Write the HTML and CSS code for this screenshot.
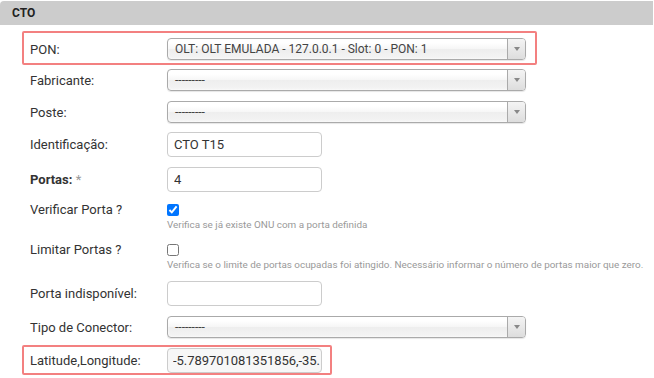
FILE: index.html
```html
<!DOCTYPE html>
<html lang="pt-BR">
<head>
    <meta charset="UTF-8">
    <title>CTO</title>
    <link rel="stylesheet" href="styles.css">
</head>
<body>

<div class="panel-heading">CTO</div>

<form class="cto-form">

    <!-- PON -->
    <div class="form-row highlight wide pon-row">
        <label class="form-label">PON:</label>
        <div class="chosen">
            <span class="chosen-text">OLT: OLT EMULADA - 127.0.0.1 - Slot: 0 - PON: 1</span>
            <span class="chosen-arrow"><b></b></span>
        </div>
    </div>

    <div class="form-row wide fab-row">
        <label class="form-label">Fabricante:</label>
        <div class="chosen">
            <span class="chosen-text">---------</span>
            <span class="chosen-arrow"><b></b></span>
        </div>
    </div>

    <div class="form-row wide gap6">
        <label class="form-label">Poste:</label>
        <div class="chosen">
            <span class="chosen-text">---------</span>
            <span class="chosen-arrow"><b></b></span>
        </div>
    </div>

    <div class="form-row gap5">
        <label class="form-label">Identificação:</label>
        <input class="form-input" type="text" value="CTO T15">
    </div>

    <div class="form-row gap6">
        <label class="form-label"><strong>Portas:</strong> <span class="req">*</span></label>
        <input class="form-input" type="text" value="4">
    </div>

    <!-- checkboxes -->
    <div class="form-row check-row gap6">
        <label class="form-label">Verificar Porta ?</label>
        <div class="check-col">
            <input type="checkbox" checked>
            <span class="help">Verifica se já existe ONU com a porta definida</span>
        </div>
    </div>

    <div class="form-row check-row gap6">
        <label class="form-label">Limitar Portas ?</label>
        <div class="check-col">
            <input type="checkbox">
            <span class="help">Verifica se o limite de portas ocupadas foi atingido. Necessário informar o número de portas maior que zero.</span>
        </div>
    </div>

    <div class="form-row gap5">
        <label class="form-label">Porta indisponível:</label>
        <input class="form-input" type="text" value="">
    </div>

    <div class="form-row wide gap6">
        <label class="form-label">Tipo de Conector:</label>
        <div class="chosen">
            <span class="chosen-text">---------</span>
            <span class="chosen-arrow"><b></b></span>
        </div>
    </div>

    <div class="form-row highlight latlng-row">
        <label class="form-label">Latitude,Longitude:</label>
        <input class="form-input readonly" type="text" value="-5.789701081351856,-35." readonly>
    </div>

</form>

</body>
</html>
```

FILE: styles.css
```css
body {
    margin: 0;
    padding-top: 1px;
    font-family: Roboto, "Liberation Sans", Arial, sans-serif;
    font-size: 13px;
    color: #333;
    background: #fff;
}

.panel-heading {
    width: 641px;
    height: 24px;
    line-height: 25px;
    padding-left: 12px;
    background-color: #cccccc;
    border-radius: 4px 0 0 0;
    font-size: 12px;
    font-weight: bold;
    color: #222;
}

.cto-form {
    padding-left: 22px;
}

/* each row: label column + control column */
.form-row {
    display: flex;
    align-items: center;
    width: 310px;
    box-sizing: border-box;
    border: 2px solid transparent;
    padding: 0 6px;
}

.form-row.wide {
    width: 515px;
}

.form-row.highlight {
    border-color: #f38080;
    border-radius: 2px;
}

.pon-row {
    margin-top: 6px;
    padding-top: 5px;
    padding-bottom: 3px;
}

.fab-row { margin-top: 2px; }
.gap5 { margin-top: 5px; }
.gap6 { margin-top: 6px; }

.latlng-row {
    margin-top: 5px;
    padding-top: 1px;
    padding-bottom: 0;
}

.form-label {
    width: 137px;
    flex-shrink: 0;
}

.form-label strong {
    color: #333;
}

.req {
    color: #999;
}

/* chosen style select */
.chosen {
    display: flex;
    width: 359px;
    height: 22px;
    box-sizing: border-box;
    border: 1px solid #aaa;
    border-radius: 4px;
    background: linear-gradient(#fff 20%, #f6f6f6 50%, #eee 52%, #f4f4f4 100%);
    box-shadow: 0 0 3px #fff inset, 0 1px 1px rgba(0,0,0,.1);
    overflow: hidden;
}

.chosen-text {
    flex: 1;
    padding-left: 7px;
    line-height: 20px;
    font-size: 12px;
    color: #444;
    white-space: nowrap;
}

.chosen-arrow {
    width: 17px;
    border-left: 1px solid #aaa;
    background: linear-gradient(#f4f4f4, #ddd);
    display: flex;
    align-items: center;
    justify-content: center;
}

.chosen-arrow b {
    width: 0;
    height: 0;
    border-left: 3px solid transparent;
    border-right: 3px solid transparent;
    border-top: 4px solid #888;
}

.form-input {
    width: 155px;
    height: 25px;
    box-sizing: border-box;
    margin: 0;
    padding: 0 0 0 6px;
    border: 1px solid #ccc;
    border-radius: 4px;
    font-family: Roboto, "Liberation Sans", Arial, sans-serif;
    font-size: 13px;
    color: #333;
    background: #fff;
}

.form-input.readonly {
    background: #f7f7f7;
    padding-left: 5px;
    letter-spacing: -0.05px;
}

.check-row {
    align-items: flex-start;
    width: 640px;
}

.check-row .form-label {
    line-height: 14px;
    padding-top: 1px;
}

.check-col {
    display: flex;
    flex-direction: column;
    align-items: flex-start;
}

.check-col input {
    margin: 2px 0 0 0;
    width: 12px;
    height: 12px;
}

.help {
    margin-top: 2px;
    font-size: 9.9px;
    line-height: 14px;
    color: #999;
    white-space: nowrap;
}
```
